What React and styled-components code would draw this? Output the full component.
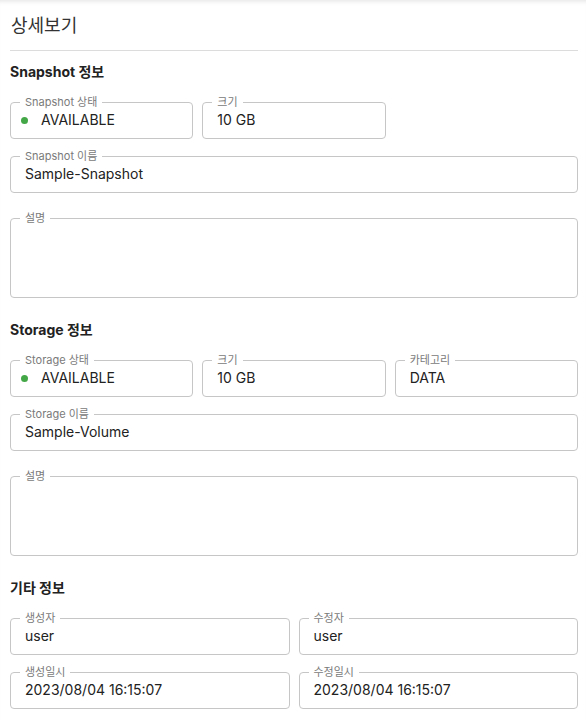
import React from 'react'
import styled, { createGlobalStyle } from 'styled-components'

const GlobalStyle = createGlobalStyle`
  html, body {
    margin: 0;
    padding: 0;
    background: #fff;
  }

  body {
    font-family: Inter, "Noto Sans CJK KR", "Noto Sans", sans-serif;
    color: #222;
  }
`

const Page = styled.div`
  padding: 0 8px 12px 10px;
  box-shadow: inset 0 5px 5px -4px rgba(0, 0, 0, 0.12);
`

const Title = styled.h1`
  margin: 0;
  padding: 13px 0 11px 1px;
  font-size: 18px;
  line-height: 26px;
  font-weight: 400;
  color: #333;
  border-bottom: 1px solid #dcdcdc;
`

const Section = styled.section`
  display: flex;
  flex-direction: column;
  gap: 11px;
  margin-top: ${props => props.first ? '11px' : '22px'};
`

const SectionTitle = styled.h2`
  margin: 0 0 3px;
  font-size: 14px;
  line-height: 20px;
  font-weight: 700;
  color: #222;
`

const Row = styled.div`
  display: grid;
  grid-template-columns: repeat(${props => props.cols || 1}, minmax(0, 1fr));
  gap: 9px;
`

const Fieldset = styled.fieldset`
  margin: ${props => props.tall ? '8px 0 0' : '0'};
  padding: 0 9px;
  min-width: 0;
  border: 1px solid #c6c6c6;
  border-radius: 4px;
`

const Legend = styled.legend`
  padding: 0 5px;
  font-size: 11px;
  line-height: 12px;
  color: #7a7a7a;
`

const Value = styled.div`
  display: flex;
  align-items: center;
  gap: 13px;
  height: ${props => props.tall ? '73px' : '20px'};
  padding: ${props => props.tall ? '0' : '2px 5px 8px'};
  font-size: 14px;
  line-height: 20px;
  color: #222;
  white-space: nowrap;
`

const StatusDot = styled.span`
  width: 7px;
  height: 7px;
  margin-left: -4px;
  border-radius: 50%;
  background: ${props => props.color};
  flex: none;
`

const Field = ({ label, children, status, tall }) => (
  <Fieldset tall={tall}>
    <Legend>{label}</Legend>
    <Value tall={tall}>
      {status && <StatusDot color='#43a747' />}
      {children}
    </Value>
  </Fieldset>
)

export default function App () {
  return (
    <Page>
      <GlobalStyle />
      <Title>상세보기</Title>

      <Section first>
        <SectionTitle>Snapshot 정보</SectionTitle>
        <Row cols={3}>
          <Field label='Snapshot 상태' status>AVAILABLE</Field>
          <Field label='크기'>10 GB</Field>
        </Row>
        <Field label='Snapshot 이름'>Sample-Snapshot</Field>
        <Field label='설명' tall />
      </Section>

      <Section>
        <SectionTitle>Storage 정보</SectionTitle>
        <Row cols={3}>
          <Field label='Storage 상태' status>AVAILABLE</Field>
          <Field label='크기'>10 GB</Field>
          <Field label='카테고리'>DATA</Field>
        </Row>
        <Field label='Storage 이름'>Sample-Volume</Field>
        <Field label='설명' tall />
      </Section>

      <Section>
        <SectionTitle>기타 정보</SectionTitle>
        <Row cols={2}>
          <Field label='생성자'>user</Field>
          <Field label='수정자'>user</Field>
        </Row>
        <Row cols={2}>
          <Field label='생성일시'>2023/08/04 16:15:07</Field>
          <Field label='수정일시'>2023/08/04 16:15:07</Field>
        </Row>
      </Section>
    </Page>
  )
}
